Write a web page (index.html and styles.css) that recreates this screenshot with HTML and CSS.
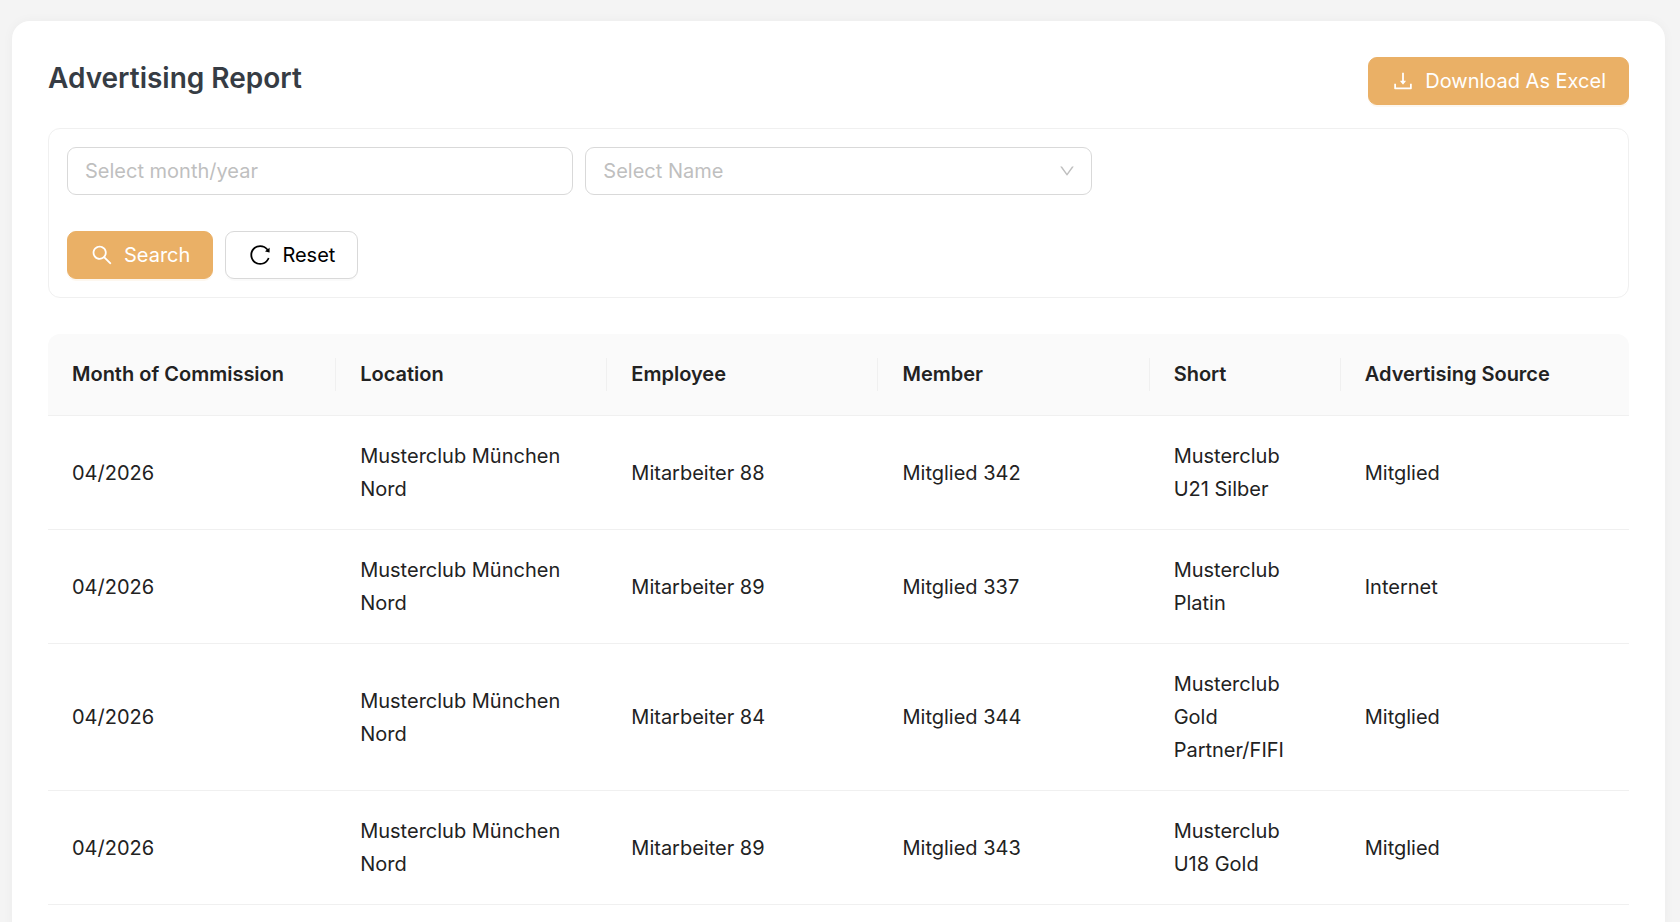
FILE: index.html
```html
<!DOCTYPE html>
<html lang="en">
<head>
    <meta charset="UTF-8">
    <meta name="viewport" content="width=device-width, initial-scale=1.0">
    <title>Advertising Report</title>
    <link rel="stylesheet" href="styles.css">
</head>
<body>
    <main class="page">
        <div class="card">
            <div class="card-header">
                <h1>Advertising Report</h1>
                <button type="button" class="btn btn-primary">
                    <svg class="icon" viewBox="0 0 1024 1024" aria-hidden="true"><path d="M505.700 661a8 8 0 0012.600 0l112-141.700c4.100-5.200.400-12.900-6.300-12.900h-74.100V168c0-4.400-3.600-8-8-8h-60c-4.400 0-8 3.600-8 8v338.300H400c-6.700 0-10.400 7.700-6.300 12.900l112 141.800zM878 626h-60c-4.400 0-8 3.600-8 8v154H214V634c0-4.400-3.600-8-8-8h-60c-4.400 0-8 3.600-8 8v198c0 17.700 14.300 32 32 32h684c17.700 0 32-14.300 32-32V634c0-4.400-3.600-8-8-8z"/></svg>
                    <span>Download As Excel</span>
                </button>
            </div>

            <form class="filters">
                <div class="filter-fields">
                    <input type="text" class="field" placeholder="Select month/year" aria-label="Month/year">
                    <div class="select-wrap">
                        <select class="field" aria-label="Name">
                            <option value="">Select Name</option>
                        </select>
                        <svg class="chevron" viewBox="0 0 1024 1024" aria-hidden="true"><path d="M884 256h-75c-5.100 0-9.900 2.500-12.900 6.600L512 654.200 227.900 262.600c-3-4.100-7.800-6.600-12.900-6.600h-75c-6.500 0-10.300 7.400-6.500 12.700l352.600 486.100c12.800 17.600 39 17.600 51.700 0l352.600-486.100c3.900-5.300.1-12.700-6.400-12.700z"/></svg>
                    </div>
                </div>
                <div class="filter-actions">
                    <button type="button" class="btn btn-primary">
                        <svg class="icon" viewBox="0 0 1024 1024" aria-hidden="true"><path d="M909.600 854.500L649.900 594.800C690.200 542.700 712 479 712 412c0-80.200-31.300-155.400-87.900-212.100-56.600-56.700-132-87.900-212.100-87.900s-155.500 31.300-212.100 87.900C143.200 256.500 112 331.800 112 412c0 80.100 31.300 155.500 87.900 212.100C256.500 680.800 331.800 712 412 712c67 0 130.600-21.800 182.700-62l259.700 259.600a8.200 8.200 0 0011.600 0l43.600-43.500a8.200 8.200 0 000-11.600zM570.400 570.400C528 612.700 471.800 636 412 636s-116-23.300-158.400-65.600C211.300 528 188 471.800 188 412s23.300-116.100 65.600-158.400C296 211.300 352.200 188 412 188s116.100 23.200 158.400 65.600S636 352.200 636 412s-23.300 116.100-65.600 158.400z"/></svg>
                        <span>Search</span>
                    </button>
                    <button type="reset" class="btn">
                        <svg class="icon" viewBox="0 0 1024 1024" aria-hidden="true"><path d="M909.100 209.300l-56.400 44.100C775.800 155.100 656.200 92 521.900 92 290 92 102.300 279.500 102 511.500 101.700 743.700 289.800 932 521.900 932c181.300 0 335.800-115 394.600-276.100 1.500-4.200-.7-8.900-4.900-10.300l-56.700-19.500a8 8 0 00-10.100 4.800c-1.800 5-3.800 10-5.900 14.900-17.300 41-42.100 77.800-73.700 109.400A344.770 344.770 0 01655.900 829c-42.300 17.900-87.400 27-133.800 27-46.500 0-91.500-9.100-133.800-27A341.500 341.500 0 01279 755.200a342.160 342.160 0 01-73.700-109.400c-17.900-42.400-27-87.400-27-133.900s9.100-91.500 27-133.900c17.300-41 42.100-77.800 73.700-109.400 31.600-31.600 68.400-56.400 109.300-73.800 42.300-17.900 87.400-27 133.800-27 46.500 0 91.500 9.100 133.800 27a341.500 341.500 0 01109.300 73.800c9.900 9.900 19.200 20.400 27.800 31.400l-60.200 47a8 8 0 003 14.100l175.600 43c5 1.200 9.900-2.600 9.900-7.700l.8-180.900c-.1-6.600-7.800-10.300-13-6.200z"/></svg>
                        <span>Reset</span>
                    </button>
                </div>
            </form>

            <table class="report">
                <thead>
                    <tr>
                        <th class="col-wide">Month of Commission</th>
                        <th class="col-mid">Location</th>
                        <th class="col-mid">Employee</th>
                        <th class="col-mid">Member</th>
                        <th class="col-short">Short</th>
                        <th class="col-wide">Advertising Source</th>
                    </tr>
                </thead>
                <tbody>
                    <tr>
                        <td>04/2026</td>
                        <td>Musterclub München Nord</td>
                        <td>Mitarbeiter 88</td>
                        <td>Mitglied 342</td>
                        <td>Musterclub U21 Silber</td>
                        <td>Mitglied</td>
                    </tr>
                    <tr>
                        <td>04/2026</td>
                        <td>Musterclub München Nord</td>
                        <td>Mitarbeiter 89</td>
                        <td>Mitglied 337</td>
                        <td>Musterclub Platin</td>
                        <td>Internet</td>
                    </tr>
                    <tr>
                        <td>04/2026</td>
                        <td>Musterclub München Nord</td>
                        <td>Mitarbeiter 84</td>
                        <td>Mitglied 344</td>
                        <td>Musterclub Gold Partner/FIFI</td>
                        <td>Mitglied</td>
                    </tr>
                    <tr>
                        <td>04/2026</td>
                        <td>Musterclub München Nord</td>
                        <td>Mitarbeiter 89</td>
                        <td>Mitglied 343</td>
                        <td>Musterclub U18 Gold</td>
                        <td>Mitglied</td>
                    </tr>
                </tbody>
            </table>
        </div>
    </main>
</body>
</html>
```
FILE: styles.css
```css
* {
    box-sizing: border-box;
}
body {
    margin: 0;
    background-color: #f4f4f4;
    font-family: Inter, "Liberation Sans", sans-serif;
    font-size: 20px;
    line-height: 33px;
    color: #222;
}
.page {
    height: 100vh;
    padding: 21px 15px 21px 12px;
    overflow-y: auto;
    scrollbar-width: none;
}
.card {
    padding: 36px;
    background-color: #fff;
    border-radius: 18px;
    box-shadow: 0 0 12px rgba(0, 0, 0, 0.04);
}
.card-header {
    display: flex;
    justify-content: space-between;
    align-items: flex-start;
    margin-bottom: 23px;
}
h1 {
    margin: 0;
    font-size: 28px;
    line-height: 43px;
    font-weight: 600;
    color: #363c44;
}

/* buttons */
.btn {
    display: flex;
    align-items: center;
    gap: 10px;
    height: 48px;
    padding: 0 22px;
    font: inherit;
    color: #000;
    background-color: #fff;
    border: 1px solid #d9d9d9;
    border-radius: 9px;
    box-shadow: 0 2px 0 rgba(0, 0, 0, 0.02);
    cursor: pointer;
}
.btn-primary {
    color: #fff;
    background-color: #eab066;
    border-color: #eab066;
    box-shadow: 0 2px 0 rgba(234, 176, 102, 0.1);
}
.icon {
    width: 24px;
    height: 24px;
    fill: currentColor;
}

/* filters */
.filters {
    padding: 18px;
    margin-bottom: 36px;
    border: 1px solid #f0f0f0;
    border-radius: 12px;
}
.filter-fields {
    display: grid;
    grid-template-columns: repeat(3, 1fr);
    gap: 12px;
    margin-bottom: 36px;
}
.field {
    display: block;
    width: 100%;
    height: 48px;
    padding: 0 17px;
    font: inherit;
    color: #bfbfbf;
    background-color: #fff;
    border: 1px solid #d9d9d9;
    border-radius: 9px;
    appearance: none;
}
.field::placeholder {
    color: #bfbfbf;
}
.select-wrap {
    position: relative;
}
.chevron {
    position: absolute;
    top: 15px;
    right: 16px;
    width: 18px;
    height: 18px;
    fill: #bfbfbf;
    pointer-events: none;
}
.filter-actions {
    display: flex;
    gap: 12px;
}

/* table */
.report {
    width: 100%;
    table-layout: fixed;
    border-collapse: separate;
    border-spacing: 0;
}
.report th,
.report td {
    padding: 24px 24px 23px;
    text-align: left;
    vertical-align: middle;
    border-bottom: 1px solid #f0f0f0;
}
.report th {
    position: relative;
    padding-bottom: 24px;
    font-weight: 600;
    background-color: #fafafa;
}
.report th:first-child {
    border-top-left-radius: 12px;
}
.report th:last-child {
    border-top-right-radius: 12px;
}
.report th:not(:last-child)::after {
    content: "";
    position: absolute;
    top: 24px;
    right: 0;
    width: 1px;
    height: 33px;
    background-color: #f0f0f0;
}
.col-wide {
    width: 288px;
}
.col-mid {
    width: 271px;
}
.col-short {
    width: 191px;
}
```
